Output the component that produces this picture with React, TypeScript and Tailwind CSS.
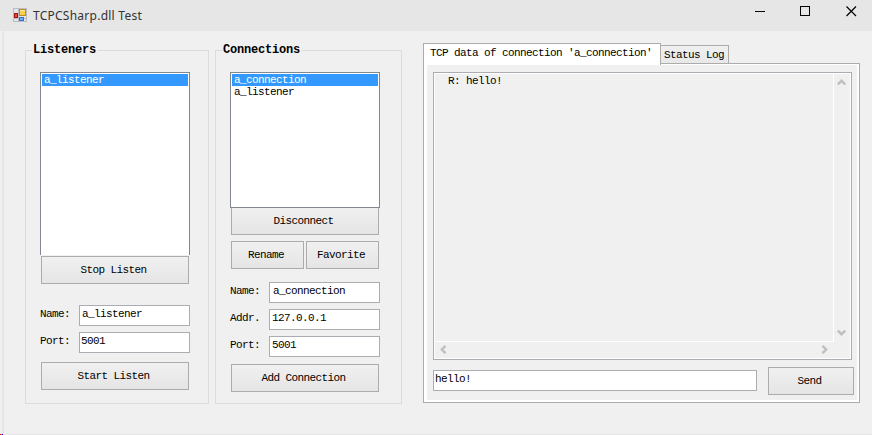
import type { ReactNode } from 'react';

function Group({ title, className, children }: { title: string; className: string; children: ReactNode }) {
  return (
    <section className={`flex h-[354px] shrink-0 flex-col border border-[#dcdcdc] pl-[14px] ${className}`}>
      <h2 className="-mt-[8px] -ml-[8px] h-[14px] self-start bg-[#f0f0f0] pr-[2px] pl-px text-[12px] leading-[14px] font-bold tracking-[-0.2px]">
        {title}
      </h2>
      {children}
    </section>
  );
}

function Button({ label, className }: { label: string; className: string }) {
  return (
    <button
      className={`flex shrink-0 items-center justify-center border border-[#acacac] bg-linear-to-b from-[#f0f0f0] to-[#e5e5e5] pr-[3px] pb-px leading-[14px] ${className}`}
    >
      {label}
    </button>
  );
}

function Field({ label, value, pad }: { label: string; value: string; pad: string }) {
  return (
    <div className="flex h-[21px] w-[150px]">
      <label className="w-[39px] pt-[2px] leading-[14px]">{label}</label>
      <div className={`h-[21px] w-[111px] border border-[#abadb3] bg-white pt-px leading-[14px] ${pad}`}>{value}</div>
    </div>
  );
}

function ListBox({ items, className }: { items: string[]; className: string }) {
  return (
    <ul className={`mt-[15px] w-[150px] shrink-0 border-[#828790] bg-white p-px ${className}`}>
      {items.map((item, i) => (
        <li key={item} className={`h-[12px] pl-[2px] leading-[12px] ${i === 0 ? 'bg-[#3399ff] text-white' : ''}`}>
          {item}
        </li>
      ))}
    </ul>
  );
}

function Chevron({ d }: { d: string }) {
  return (
    <svg width="9" height="9" viewBox="0 0 9 9" fill="none" stroke="#bfbfbf" strokeWidth="2.4">
      <path d={d} />
    </svg>
  );
}

function AppIcon() {
  return (
    <svg width="14" height="14" viewBox="0 0 14 14">
      <rect x="0.5" y="0.5" width="13" height="13" fill="#e2e5ea" stroke="#b9bec6" />
      <path d="M5.5 0V14M0 10.5H14" stroke="#b9bec6" />
      <rect x="6.5" y="1.5" width="6" height="6" fill="#fbd04e" stroke="#c58b1b" />
      <path d="M7 2.5H12" stroke="#ffeaa0" />
      <rect x="1.5" y="5.5" width="3" height="4" fill="#e5433b" stroke="#a81510" />
      <rect x="6.5" y="9.5" width="4" height="3" fill="#75a9f5" stroke="#3970cb" />
    </svg>
  );
}

export default function App() {
  return (
    <div className="flex h-[435px] w-[872px] flex-col overflow-hidden bg-[#f0f0f0] font-['Liberation_Mono',monospace] text-[11px] tracking-[-0.6px] text-black">
      <header className="flex h-[31px] shrink-0 bg-[#e6e6e6]">
        <div className="pt-[8px] pl-[13px]">
          <AppIcon />
        </div>
        <h1 className="w-[726px] shrink-0 pt-[8px] pl-[6px] font-['Noto_Sans','Open_Sans',sans-serif] text-[12px] leading-[16px] tracking-[0.25px] text-[#333]">
          TCPCSharp.dll Test
        </h1>
        <svg className="shrink-0" width="105" height="24" viewBox="0 0 105 24" fill="none" stroke="#000">
          <path d="M2 11.5H12" />
          <rect x="47.5" y="6.5" width="9" height="9" />
          <path d="M93.5 6.5L103 16M103 6.5L93.5 16" strokeWidth="1.2" />
        </svg>
      </header>
      <main className="flex h-[403px] shrink-0">
        <div className="mr-[21px] ml-[2px] h-[403px] w-[2px] shrink-0 bg-[#e6e6e6]" />
        <div className="flex pt-[19px]">
          <Group title="Listeners" className="w-[184px]">
            <ListBox items={['a_listener']} className="h-[183px] border-x border-t" />
            <Button label="Stop Listen" className="mt-px ml-px h-[28px] w-[148px]" />
            <div className="mt-[21px] flex flex-col gap-[6px]">
              <Field label="Name:" value="a_listener" pad="pl-[2px]" />
              <Field label="Port:" value="5001" pad="pl-[1px]" />
            </div>
            <Button label="Start Listen" className="mt-[9px] ml-px h-[28px] w-[148px]" />
          </Group>
          <Group title="Connections" className="ml-[6px] w-[187px]">
            <ListBox items={['a_connection', 'a_listener']} className="h-[136px] border" />
            <Button label="Disconnect" className="ml-px h-[27px] w-[148px] border-t-0" />
            <div className="mt-[6px] ml-px flex gap-[2px]">
              <Button label="Rename" className="h-[28px] w-[73px]" />
              <Button label="Favorite" className="h-[28px] w-[73px]" />
            </div>
            <div className="mt-[13px] flex flex-col gap-[6px]">
              <Field label="Name:" value="a_connection" pad="pl-[3px]" />
              <Field label="Addr." value="127.0.0.1" pad="pl-[2px]" />
              <Field label="Port:" value="5001" pad="pl-[2px]" />
            </div>
            <Button label="Add Connection" className="mt-[7px] ml-px h-[28px] w-[148px]" />
          </Group>
        </div>
        <div className="ml-[21px] flex w-[437px] shrink-0 flex-col pt-[12px]">
          <div className="z-10 flex h-[22px] items-start">
            <div className="h-[22px] w-[238px] border border-b-0 border-[#acacac] bg-white pt-[2px] pl-[6px] leading-[14px] whitespace-pre">
              {"TCP data of connection 'a_connection'"}
            </div>
            <div className="mt-[2px] h-[19px] w-[68px] border border-l-0 border-[#acacac] bg-linear-to-b from-[#f0f0f0] to-[#e8e8e8] pt-[2px] pl-[3px] leading-[14px] whitespace-pre">
              Status Log
            </div>
          </div>
          <div className="-mt-[2px] h-[340px] border border-[#acacac] bg-white pt-px pr-[2px] pb-[2px] pl-[3px]">
            <div className="h-full bg-[#f0f0f0] pt-[7px] pl-[6px]">
              <div className="grid h-[288px] w-[419px] grid-cols-[400px_17px] grid-rows-[269px_17px] border border-[#abadb3] shadow-[inset_0_0_0_1px_#fff]">
                <div className="border-r border-b border-white pt-px pl-[14px] leading-[14px]">R: hello!</div>
                <div className="flex flex-col items-center justify-between py-[5px] pr-[3px]">
                  <Chevron d="M0.8 6.5L4.5 2.8L8.2 6.5" />
                  <Chevron d="M0.8 2.5L4.5 6.2L8.2 2.5" />
                </div>
                <div className="flex items-center justify-between pr-[5px] pb-[2px] pl-[5px]">
                  <Chevron d="M6.5 0.8L2.8 4.5L6.5 8.2" />
                  <Chevron d="M2.5 0.8L6.2 4.5L2.5 8.2" />
                </div>
              </div>
              <div className="mt-[7px] flex">
                <div className="mt-[3px] h-[21px] w-[324px] border border-[#abadb3] bg-white pt-px pl-[1px] leading-[14px]">
                  hello!
                </div>
                <Button label="Send" className="ml-[11px] h-[28px] w-[86px]" />
              </div>
            </div>
          </div>
        </div>
      </main>
      <footer className="flex h-px bg-[#e6e6e6]">
        <i className="size-px bg-[#f00]" />
        <i className="size-px bg-[#0f0]" />
        <i className="size-px bg-[#00f]" />
      </footer>
    </div>
  );
}
